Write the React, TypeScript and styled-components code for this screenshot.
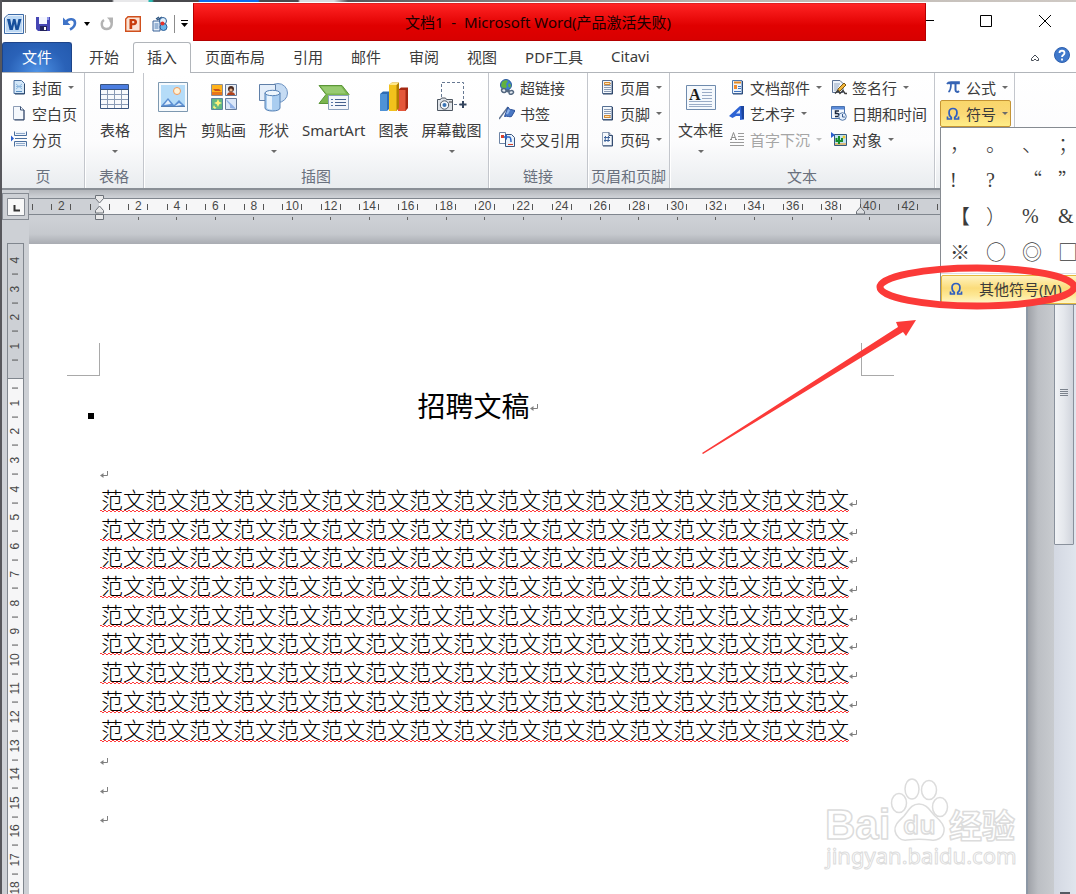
import React from "react";
import styled, { createGlobalStyle, css } from "styled-components";

const UI_FONT = '"Noto Sans", "Noto Sans CJK SC", sans-serif';
const CJK_FONT = '"Noto Sans CJK SC", sans-serif';

const GlobalStyle = createGlobalStyle`
  * { box-sizing: border-box; }
  html, body { margin: 0; padding: 0; }
  body { font-family: ${UI_FONT}; font-size: 15px; color: #3b3b3b; background: #fff; }
  button { font: inherit; color: inherit; border: 0; background: none; padding: 0; margin: 0; white-space: nowrap; }
`;

const Desktop = styled.div`
  position: relative;
  display: flex;
  flex-direction: column;
  height: 100vh;
  overflow: hidden;
  border-left: 2px solid #57575c;
  background: #fff;
`;

const Wallpaper = styled.div`
  flex: none;
  height: 2px;
  background: linear-gradient(90deg, #4a4c50 0 110px, #e8e8ea 112px 146px, #28b8b0 147px 150px, #48484c 152px 196px, #0a6cf0 198px 256px, #4a4a4e 258px 296px, #d8dce0 298px 332px, #55555a 346px, #b9b4ae 700px, #cfc9c4 100%);
`;

const TitleBar = styled.header`
  flex: none;
  display: flex;
  height: 40px;
`;

const QuickAccess = styled.div`
  flex: none;
  display: flex;
  align-items: center;
  width: 191px;
  padding-top: 4px;
`;

const QuickButton = styled.button<{ $width: number }>`
  display: flex;
  align-items: center;
  justify-content: center;
  width: ${(p) => p.$width}px;
  height: 24px;
`;

const QuickDivider = styled.span`
  width: 1px;
  height: 18px;
  background: #8c8c8c;
`;

const Banner = styled.h1`
  flex: 1;
  display: flex;
  align-items: center;
  justify-content: center;
  height: 38px;
  margin: 1px 0 0;
  padding-right: 43px;
  padding-bottom: 2px;
  border: 1px solid #b40000;
  border-top-color: #e02020;
  background: linear-gradient(#ff2424, #e00000 60%, #d80000);
  color: #1c0000;
  font-size: 15px;
  font-weight: 400;
  white-space: nowrap;
`;

const WindowControls = styled.div`
  flex: none;
  display: flex;
  width: 150px;
  overflow: hidden;
`;

const ControlButton = styled.button<{ $width: number }>`
  display: flex;
  align-items: center;
  justify-content: center;
  width: ${(p) => p.$width}px;
  height: 38px;
`;

const TabBar = styled.nav`
  flex: none;
  display: flex;
  height: 31px;
  border-bottom: 1px solid #b1b5ba;
`;

const FileTab = styled.button`
  width: 70px;
  height: 30px;
  margin-right: 3px;
  padding-bottom: 2px;
  border: 1px solid #1d4489;
  border-bottom: 0;
  border-radius: 3px 3px 0 0;
  background: radial-gradient(ellipse at 50% 100%, #4f93e6 0%, #2a62b8 60%, #2359ad 100%);
  color: #fff;
`;

const Tab = styled.button<{ $active?: boolean }>`
  height: 31px;
  padding: 0 13px 4px;
  border: 1px solid transparent;
  border-bottom: 0;
  ${(p) =>
    p.$active &&
    css`
      border-color: #b1b5ba;
      border-radius: 3px 3px 0 0;
      background: #fff;
    `}
`;

const TabTools = styled.div`
  display: flex;
  align-items: center;
  gap: 14px;
  margin-left: auto;
  padding-right: 6px;
`;

const Ribbon = styled.section`
  flex: none;
  display: flex;
  height: 117px;
  border-bottom: 2px solid #8a8f96;
  background: linear-gradient(#ffffff, #fcfcfd 60%, #e9ecef);
`;

const Group = styled.div<{ $width: number }>`
  flex: none;
  display: flex;
  flex-direction: column;
  width: ${(p) => p.$width}px;
  border-right: 1px solid #c3c6cc;
  box-shadow: 1px 0 0 #fff;
`;

const GroupBody = styled.div<{ $pad?: number }>`
  flex: 1;
  display: flex;
  padding: 1px 0 0 ${(p) => p.$pad ?? 0}px;
`;

const GroupCaption = styled.div`
  height: 23px;
  line-height: 22px;
  text-align: center;
  color: #69707d;
  white-space: nowrap;
`;

const Stack = styled.div<{ $width?: number }>`
  display: flex;
  flex-direction: column;
  align-items: flex-start;
  width: ${(p) => (p.$width ? p.$width + "px" : "auto")};
`;

const SmallButton = styled.button<{ $muted?: boolean; $open?: boolean }>`
  display: flex;
  align-items: center;
  gap: 5px;
  height: 26px;
  color: ${(p) => (p.$muted ? "#a5a5a5" : "inherit")};
  ${(p) =>
    p.$open &&
    css`
      width: 71px;
      height: 27px;
      margin-left: -5px;
      padding-left: 4px;
      border: 1px solid #c49435;
      border-radius: 2px;
      background: linear-gradient(#f9d66a, #fbd876 50%, #ffee88);
    `}
`;

const LargeButton = styled.button`
  display: flex;
  flex-direction: column;
  align-items: center;
  height: 90px;
  padding: 7px 6px 0;
`;

const LargeLabel = styled.span`
  height: 24px;
  margin-top: 5px;
  line-height: 24px;
`;

const Caret = styled.span<{ $muted?: boolean; $below?: boolean }>`
  width: 0;
  height: 0;
  margin: ${(p) => (p.$below ? "8px 0 0" : "0 0 0 1px")};
  border: 3px solid transparent;
  border-bottom-width: 0;
  border-top-color: ${(p) => (p.$muted ? "#bdbdbd" : "#6b6b6b")};
`;

const MenuAnchor = styled.div`
  position: relative;
`;

const SymbolMenu = styled.div`
  position: absolute;
  z-index: 5;
  top: 100%;
  left: -5px;
  width: 190px;
  border: 1px solid #868b91;
  background: #fff;
`;

const SymbolGrid = styled.div`
  display: grid;
  grid-template-columns: repeat(5, 36px);
  grid-auto-rows: 36px;
  padding: 0 0 1px 9px;
  border-bottom: 1px solid #dcdfe3;
`;

const SymbolCell = styled.button<{ $serif?: boolean }>`
  width: 24px;
  height: 32px;
  text-align: left;
  font-family: ${(p) => (p.$serif ? '"Liberation Serif", serif' : CJK_FONT)};
  font-size: 20px;
  font-weight: 300;
  line-height: 32px;
`;

const MoreSymbols = styled.button`
  display: flex;
  align-items: center;
  gap: 15px;
  width: 100%;
  height: 29px;
  margin-top: 1px;
  padding: 0 0 2px 6px;
  border: 1px solid #e5b93d;
  border-radius: 2px;
  background: linear-gradient(#fff3c0, #fbdc7a 45%, #fde793 70%, #fff6c8);
`;

const Workspace = styled.main`
  flex: 1;
  display: flex;
  min-height: 0;
  background: #cdd0d5;
`;

const LeftRail = styled.div`
  flex: none;
  display: flex;
  flex-direction: column;
  align-items: center;
  width: 27px;
  padding-top: 3px;
`;

const TabSelector = styled.button`
  flex: none;
  display: flex;
  align-items: center;
  justify-content: center;
  width: 27px;
  height: 27px;
  border: 1px solid #868b93;
`;

const VerticalRuler = styled.div`
  flex: 1;
  min-height: 0;
  width: 17px;
  margin-top: 23px;
  padding-top: 2px;
  overflow: hidden;
  border: 1px solid #80868e;
  border-bottom: 0;
  background: linear-gradient(#cdd0d5 0 134px, #80868e 134px 135px, #f6f6f7 135px);
`;

const VerticalScale = styled.div`
  display: grid;
  grid-template-rows: repeat(23, 1fr);
  height: 657px;
`;

const VerticalMark = styled.span`
  display: flex;
  align-items: center;
  justify-content: center;
  background: linear-gradient(#555, #555) 50% 0 / 6px 1px no-repeat;
  writing-mode: vertical-rl;
  transform: rotate(180deg);
  font: 12px/15px "Liberation Sans Narrow", "Liberation Sans", sans-serif;
  color: #484848;
`;

const Center = styled.div`
  flex: 1;
  display: flex;
  flex-direction: column;
  min-width: 0;
`;

const RulerStrip = styled.div`
  position: relative;
  flex: none;
  height: 54px;
  padding-top: 8px;
  overflow: hidden;
  background: linear-gradient(#b2b5ba, #cdd0d5 7px 30px, #c6c9ce 44px, #a9acb2);
`;

const HorizontalRuler = styled.div`
  display: flex;
  height: 17px;
  border: solid #80868e;
  border-width: 1px 0;
  background: linear-gradient(90deg, #cdd0d5 0 70px, #f6f6f7 70px 831px, #80868e 831px 832px, #cdd0d5 832px);
`;

const LeadIn = styled.span`
  flex: none;
  width: 13px;
  background: linear-gradient(#555, #555) 3px 50% / 1px 6px no-repeat;
`;

const HorizontalScale = styled.div`
  flex: none;
  display: grid;
  grid-template-columns: repeat(24, 1fr);
  width: 924px;
`;

const HorizontalMark = styled.span`
  display: flex;
  align-items: center;
  justify-content: space-evenly;
  height: 15px;
  background:
    linear-gradient(#555, #555) 25% 50% / 1px 6px no-repeat,
    linear-gradient(#555, #555) 75% 50% / 1px 6px no-repeat;
  font: 12px/15px "Liberation Sans Narrow", "Liberation Sans", sans-serif;
  color: #484848;
`;

const DefaultTabs = styled.div`
  width: 770px;
  height: 3px;
  margin: 2px 0 0 71px;
  display: grid;
  grid-template-columns: repeat(20, 1fr);
  justify-items: end;
`;

const DefaultTab = styled.span`
  width: 1px;
  height: 3px;
  background: #666;
`;

const IndentMarkers = styled.svg`
  position: absolute;
  top: 5px;
  left: 65px;
`;

const RightIndent = styled.svg`
  position: absolute;
  top: 16px;
  left: 826px;
`;

const PageRow = styled.div`
  flex: 1;
  display: flex;
  min-height: 0;
`;

const Page = styled.article`
  position: relative;
  flex: 1;
  min-width: 0;
  overflow: hidden;
  border-right: 2px solid #8c97a5;
  background: #fff;
  color: #000;
`;

const PageGutter = styled.div`
  flex: none;
  width: 26px;
  background: linear-gradient(90deg, #9fa2a8, #bcbfc4 10px, #c8cbcf);
`;

const CropRow = styled.div`
  display: flex;
  gap: 761px;
  padding: 99px 0 0 38px;
`;

const CropMark = styled.span<{ $side: "left" | "right" }>`
  flex: none;
  width: 33px;
  height: 33px;
  border-bottom: 1px solid #a9a9a9;
  ${(p) => (p.$side === "left" ? "border-right" : "border-left")}: 1px solid #a9a9a9;
`;

const TitleRow = styled.div`
  display: grid;
  grid-template-columns: 6px 760px;
  column-gap: 7px;
  align-items: center;
  padding: 8px 0 0 59px;
`;

const OutlineDot = styled.span`
  width: 6px;
  height: 6px;
  margin-top: 22px;
  background: #000;
`;

const DocTitle = styled.h2`
  display: flex;
  justify-content: center;
  align-items: center;
  margin: 0 7px 0 0;
  font: 400 28px/42px ${CJK_FONT};
`;

const Paragraphs = styled.div`
  display: grid;
  grid-template-rows: repeat(13, 1fr);
  height: 373px;
  margin-top: 32px;
  padding-left: 71px;
`;

const Paragraph = styled.p`
  display: flex;
  align-items: center;
  margin: 0;
  font: 300 22px/28px ${CJK_FONT};
  white-space: nowrap;
`;

const Misspelled = styled.span`
  height: 26px;
  line-height: 20px;
  padding-left: 1px;
  background:
    repeating-linear-gradient(90deg, #ff3b3b 0 2px, transparent 2px 4px) 0 22px / 100% 1px no-repeat,
    repeating-linear-gradient(90deg, transparent 0 2px, #ff3b3b 2px 4px) 0 23px / 100% 1px no-repeat;
`;

const MarkSvg = styled.svg`
  flex: none;
  margin: 6px 0 0 0;
`;

const Watermark = styled.svg`
  position: absolute;
  top: 532px;
  right: 0;
`;

const ScrollTrack = styled.div`
  flex: none;
  width: 22px;
  padding-top: 24px;
  display: flex;
  flex-direction: column;
  justify-content: space-between;
  background: linear-gradient(90deg, #d3d8e2, #e0e5ed);
`;

const ScrollThumb = styled.button`
  display: flex;
  align-items: center;
  justify-content: center;
  width: 20px;
  height: 331px;
  padding-top: 26px;
  border: 1px solid #89919c;
  border-radius: 1px;
  background: linear-gradient(90deg, #f1f3f6, #e4e7ec 50%, #d0d4dc);
`;

const ScrollDown = styled.span`
  width: 10px;
  height: 2px;
  margin-left: 6px;
  background: #555a62;
`;

const Annotation = styled.svg`
  position: absolute;
  z-index: 9;
  top: 260px;
  left: 698px;
  pointer-events: none;
`;

/* ---------- icons ---------- */

const sheet = "#4a6f9e";

function Svg({ s = 16, w, children }: { s?: number; w?: number; children: React.ReactNode }) {
  return (
    <svg width={w ?? s} height={s} viewBox={`0 0 ${w ?? s} ${s}`} fill="none" aria-hidden="true">
      {children}
    </svg>
  );
}

const WordIcon = () => (
  <Svg s={20}>
    <path d="M4 .5h15.500v19H.5V4z" fill="#e8f1fb" stroke="#3c6ba8" />
    <path d="M4 2h14v16H2V5z" fill="#bcd8f4" />
    <path d="M3 5h3.200l1.300 7L9 5h2.500l1.500 7 1.400-7H17.500l-3 11h-3L10.200 10 8.800 16H5.600z" fill="#17509c" />
  </Svg>
);
const SaveIcon = () => (
  <Svg>
    <path d="M1 1h14v14H3l-2-2z" fill="#4646b4" />
    <path d="M4 1h8v7H4z" fill="#f4f6ff" />
    <path d="M12 1h2v3h-2z" fill="#8f96e8" />
    <path d="M5 10h7v5H5z" fill="#22225c" />
    <path d="M9 11h2v3H9z" fill="#fff" />
  </Svg>
);
const UndoIcon = () => (
  <Svg>
    <path d="M4 6c3-4 9-3.500 9 1 0 3-2 5-5 6.500" stroke="#3f74c8" strokeWidth="2.600" />
    <path d="M1 1.500V9h7.500z" fill="#3f74c8" />
  </Svg>
);
const RedoIcon = () => (
  <Svg>
    <path d="M5 4C1.500 6 2 13 7.500 13S14 7 11 4" stroke="#b3b3b3" strokeWidth="2.400" />
    <path d="M8 1.500h6V8z" fill="#b3b3b3" />
  </Svg>
);
const PptIcon = () => (
  <Svg>
    <path d="M3 .7h12.300v14.600H.7V3z" fill="#fbe4d6" stroke="#d0501d" strokeWidth="1.400" />
    <path d="M4.500 3h4.200c4.500 0 4.500 6.200 0 6.200H7.200V13H4.500zm2.700 2v2.300h1c1.600 0 1.600-2.300 0-2.300z" fill="#c83c0c" fillRule="evenodd" />
  </Svg>
);
const CiteIcon = () => (
  <Svg>
    <path d="M1 5h7v10H1z" fill="#e7f0fa" stroke="#3a6398" />
    <path d="M2.500 8h4M2.500 10h4M2.500 12h4" stroke="#4d7ab2" />
    <path d="M4 3l3-2M7 4l3-2M5 4l5-3" stroke="#29527e" strokeWidth="1.300" />
    <circle cx="11" cy="5" r="3.500" fill="#dff0fc" stroke="#2b5d97" />
    <circle cx="11.500" cy="11" r="3.500" fill="#69b5ea" stroke="#2b5d97" />
    <circle cx="10.500" cy="7.500" r="2" fill="#e5322a" />
  </Svg>
);
const CoverIcon = () => (
  <Svg>
    <path d="M3 1.500h7.500L13.500 4.500v10H3z" fill="#d3e7f8" stroke={sheet} />
    <path d="M5 5l6 5M11 5l-6 5M5 7.500h6" stroke="#8db8df" />
    <path d="M5 12.500h6" stroke="#5a90c4" />
    <path d="M13.500 5v10H4" stroke="#2b4668" />
  </Svg>
);
const BlankIcon = () => (
  <Svg>
    <path d="M2.500 1.500h7l3.500 3.500v9.500H2.500z" fill="#f5f8fc" stroke="#8d9db5" />
    <path d="M9.500 1.500V5H13" stroke="#3c5275" />
    <path d="M13 5v10H3.500" stroke="#2b3f60" />
  </Svg>
);
const BreakIcon = () => (
  <Svg>
    <path d="M3.500.5v4h12v-4M3.500 15.500v-5h12v5" fill="#eef3fa" stroke="#4a6f9e" />
    <path d="M5 2.500h9M5 12.500h9M5 14.500h9" stroke="#8fa9cb" />
    <path d="M4 7.500h12" stroke="#4a6f9e" />
    <path d="M0 4.500v6l3-3z" fill="#2a5fd0" />
  </Svg>
);
const TableIcon = () => (
  <Svg s={32}>
    <path d="M1.500 3.500h28v24h-28z" fill="#f8fafd" stroke="#39547e" />
    <path d="M2 4h27v4H2z" fill="#4b7de0" />
    <path d="M2 13.500h27M2 18.500h27M2 23.500h27M8.500 8v19M15.500 8v19M22.500 8v19" stroke="#8a9bb6" />
    <path d="M2 8.500h27" stroke="#39547e" />
  </Svg>
);
const PictureIcon = () => (
  <Svg s={32}>
    <path d="M1.500 1.500h29v29h-29z" fill="#f6fafd" stroke="#7d98b0" />
    <path d="M4 4h24v21H4z" fill="#b5dcf8" />
    <circle cx="20" cy="10" r="3.500" fill="#fff2d6" stroke="#f29a5a" />
    <path d="M4 25l7-8 6 7 5-5 6 6z" fill="#5c8fd2" />
    <path d="M7 24l4-5 3 4M18 25l4-3 3 2" fill="#e4f0fc" />
    <path d="M4 25.500h24" stroke="#5680b4" />
  </Svg>
);
const ClipArtIcon = () => (
  <Svg s={32}>
    <path d="M3.500 3.500h11v11h-11z" fill="#ffb21a" stroke="#8a8f9a" />
    <path d="M4 11h10v3H4z" fill="#e8761a" />
    <path d="M5 8h6l2 2H7z" fill="#c8501a" />
    <path d="M17.500 3.500h11v11h-11z" fill="#e9eef5" stroke="#667a98" />
    <path d="M19 14c0-4 8-4 8 0z" fill="#b0421c" />
    <circle cx="23" cy="8" r="3" fill="#4a2a20" />
    <circle cx="23" cy="9" r="1.600" fill="#e8b48a" />
    <path d="M3.500 17.500h11v11h-11z" fill="#63b884" stroke="#5a86a0" />
    <path d="M10 18l1.200 2.800L14 22l-2.800 1.200L10 26l-1.200-2.800L6 22l2.800-1.200zM6 24l1 2 1.500.5L7 28l-2-1.500z" fill="#fff27a" />
    <path d="M17.500 17.500h11v11h-11z" fill="#dbe7f8" stroke="#667a98" />
    <path d="M18 18c1 5 5 4 4 9l6 1c-3-4-6-6-10-10z" fill="#8fb0e6" />
  </Svg>
);
const ShapesIcon = () => (
  <Svg s={32}>
    <circle cx="20" cy="12" r="9.500" fill="#c5dbf3" stroke="#6d93c2" />
    <path d="M1.500 3.500h16v16h-16z" fill="#e4eefa" stroke="#5f7fa8" />
    <path d="M7 12v15c0 4 15 4 15 0V12z" fill="#a9cdf0" stroke="#5480b4" />
    <path d="M9 13v14c1.500 1.500 3 1.600 5 1.700V13z" fill="#e8f3fd" />
    <ellipse cx="14.500" cy="12" rx="7.500" ry="2.700" fill="#eef6fd" stroke="#5480b4" />
  </Svg>
);
const SmartArtIcon = () => (
  <Svg s={32} w={34}>
    <path d="M2 4.500h23l7 9-7 9H2l7-9z" fill="#7ab54f" stroke="#5b9638" />
    <path d="M4 5.500h20l5 7H9.500z" fill="#98cb72" />
    <path d="M11.500 14.500h20v14h-20z" fill="#f4f7fb" stroke="#8ba1bd" />
    <path d="M18 18.500h11M18 21.500h11M18 24.500h11" stroke="#46628e" />
    <path d="M14 18.500h2M14 21.500h2M14 24.500h2" stroke="#5878a8" />
  </Svg>
);
const ChartIcon = () => (
  <Svg s={32}>
    <path d="M2 13l3-2.500h6V28l-2 2H2z" fill="#2f6db4" />
    <path d="M2 13h7v17H2z" fill="#4e92d6" />
    <path d="M20 9l3-2.500h7V27l-2.500 3H20z" fill="#a52812" />
    <path d="M20 9h7.500v21H20z" fill="#e4573a" />
    <path d="M11 4l3-2.500h7V27l-2.500 3H11z" fill="#b07d00" />
    <path d="M11 4h7.500v26H11z" fill="#f2c21c" />
    <path d="M11 4l3-2.500h7L18.500 4z" fill="#ffe88a" />
  </Svg>
);
const ScreenshotIcon = () => (
  <Svg s={32}>
    <path d="M5.500 16V1.500h22V20" stroke="#667892" strokeDasharray="3 2" />
    <path d="M18 23.500h6" stroke="#667892" strokeDasharray="3 2" />
    <path d="M27 20v7M23.500 23.500h7" stroke="#34455e" strokeWidth="2" />
    <path d="M1.500 18.500h3l1-1.500h4l1 1.500h6v11h-15z" fill="#dfe3e8" stroke="#4c5560" />
    <circle cx="8.500" cy="24" r="4.200" fill="#f5f8fb" stroke="#4c5560" />
    <circle cx="8.500" cy="24" r="2" fill="#3b75b5" />
    <path d="M13 21h3" stroke="#333" />
  </Svg>
);
const LinkIcon = () => (
  <Svg>
    <circle cx="7" cy="6" r="5.500" fill="#3c7fd0" stroke="#2b5c9c" />
    <path d="M3 3c2-2 5-2 6-1L7 5 8 8l-3 2-3-3zM10 4l2 2-1 3-2-2z" fill="#63b23e" />
    <path d="M3 12.500c-2-3 3-4 4-1.500l4 1c3-2 5 2 2 3s-3-1-3-2l-3-1c0 2-3 2-4 .5z" stroke="#53677f" strokeWidth="1.500" fill="#e4eaf1" />
  </Svg>
);
const BookmarkIcon = () => (
  <Svg>
    <path d="M0 14L9 2" stroke="#5f7391" strokeWidth="1.400" />
    <path d="M9 2c1 2 2 2.500 3 2.500l4 1-3.500 6c-2 1-4-1-7 0z" fill="#4a78c4" stroke="#2c519a" />
    <path d="M9 4l-2 5 2 .3 2-4z" fill="#8db2e8" />
  </Svg>
);
const CrossRefIcon = () => (
  <Svg>
    <path d="M.5 1.500h6v11h-6z" fill="#fff" stroke="#6d84a5" />
    <path d="M2 4h3v3H2z" fill="#d8402a" />
    <path d="M6.500 3.500h6l3 3v9h-9z" fill="#eaf2fb" stroke="#37547f" />
    <path d="M7 6h3c2 0 2 2 2 5" stroke="#2b66c2" strokeWidth="1.500" />
    <path d="M8 3v6L4.500 6z" fill="#2b66c2" />
    <path d="M9 13.500h5" stroke="#d8402a" />
  </Svg>
);
const HeaderIcon = ({ footer = false }: { footer?: boolean }) => (
  <Svg>
    <path d="M3.500 1.500h9.500v13H3.500z" fill="#f4f8fc" stroke="#566f92" />
    <path d="M5 4.500h7M5 6.500h7M5 8.500h7M5 10.500h7M5 12.500h7" stroke="#8b9cb5" />
    <path d={footer ? "M5.500 10.500h5.500v2H5.500z" : "M5.500 3.500h5.500v2H5.500z"} fill="#ffe2b0" stroke="#d58a32" />
    <path d="M13.500 2v13H4" stroke="#2f4669" />
  </Svg>
);
const PageNumberIcon = () => (
  <Svg>
    <path d="M3.500 1.500H10l3 3v10H3.500z" fill="#f6f9fd" stroke="#8d9db5" />
    <path d="M6.500 5L6 11M9.500 5L9 11M5 6.500h6M5 9.500h6" stroke="#41659c" />
    <path d="M10 1.500v3h3.500V15H4" stroke="#334b70" />
  </Svg>
);
const TextBoxIcon = () => (
  <Svg s={32}>
    <path d="M1.500 4.500h29v24h-29z" fill="#f5f9fd" stroke="#6f8bad" />
    <path d="M17 8.500h10M17 11.500h10M17 14.500h10M17 17.500h10M4 20.500h23M4 23.500h23M4 25.500h23" stroke="#9aacc6" />
    <text x="4" y="19" fontFamily="Liberation Serif" fontSize="16" fontWeight="700" fill="#1c1c1c">A</text>
  </Svg>
);
const PartsIcon = () => (
  <Svg>
    <path d="M3.500 1.500H13v13H3.500z" fill="#eef4fb" stroke="#4f77ad" />
    <path d="M5 3.500h7" stroke="#e28a24" strokeWidth="2" />
    <path d="M5 6h3v4H5z" fill="#f08b2c" />
    <path d="M9 7.500h3M9 9.500h3M5 12.500h7" stroke="#3f74c0" />
    <path d="M13.500 2v13H4" stroke="#2c4a78" />
  </Svg>
);
const WordArtIcon = () => (
  <Svg>
    <path d="M0 11l11-10h4v13.500l-4 .5v-4H7L3.500 13z" fill="#2d63d4" />
    <path d="M7 8.500l4-4v4z" fill="#dfe9fb" />
    <path d="M12 1h3v13h-2z" fill="#1c459e" />
  </Svg>
);
const DropCapIcon = () => (
  <Svg>
    <path d="M9 2.500h6M9 5.500h6M9 8.500h6M1 11.500h14M1 14.500h14" stroke="#9a9a9a" />
    <path d="M1 8.500h2M6 8.500h2M2 8.500L4.500 1.500 7 8.500M3 6.500h3" stroke="#8d8d8d" />
  </Svg>
);
const SignatureIcon = () => (
  <Svg>
    <path d="M1.500 1.500H9l3 3v9H1.500z" fill="#edf3fa" stroke="#5c7294" />
    <path d="M3 5h6M3 7h5M3 9h4M3 11h3" stroke="#93a6c1" />
    <path d="M13 4l2 2-6 6-3 1 1-3z" fill="#f3b63b" stroke="#7b5a14" />
    <path d="M4 14.500l3-3 2 3 3-3 2 3h2" stroke="#3d3d3d" strokeWidth="1.400" />
  </Svg>
);
const DateIcon = () => (
  <Svg>
    <path d="M.5 1.500h13v12H.5z" fill="#f4f8fd" stroke="#4a73b0" />
    <path d="M1 2h12v2.500H1z" fill="#5a8ad8" />
    <path d="M8 6H4.500v2.500h1.700c2.200 0 2.200 3 0 3H4" stroke="#1d2a40" strokeWidth="1.500" />
    <circle cx="11.500" cy="11.500" r="3.800" fill="#e3eefb" stroke="#5578a8" />
    <path d="M11.500 9v3h2.300" stroke="#3d5f92" />
  </Svg>
);
const ObjectIcon = () => (
  <Svg>
    <path d="M3.500 3.500h12v11h-12z" fill="#bde2f0" stroke="#35587c" />
    <path d="M4 12h11v2H4z" fill="#d9b77a" />
    <circle cx="13" cy="6" r="1.500" fill="#f4c52e" />
    <path d="M8 13V5M5.500 7v3H8M11 7v3H8" stroke="#168a2c" strokeWidth="2" />
    <path d="M0 1v6l4-3z" fill="#2a5fd0" />
  </Svg>
);
const PiIcon = () => (
  <Svg>
    <path d="M2 5c1-2 2-2 4-2h8v1.500H3.500M6 4.500C6 9 5 12 3.500 13" stroke="#3563b4" strokeWidth="1.700" />
    <path d="M10.500 4.500V11c0 2 2 2.500 3.500 1" stroke="#3563b4" strokeWidth="2" />
  </Svg>
);
const OmegaIcon = () => (
  <Svg>
    <path d="M2.500 10.500V13h3.800v-1.500C3.500 9.500 2.500 2.500 8 2.500s4.500 7 1.700 9V13h3.800v-2.500" stroke="#2f5ec0" strokeWidth="1.700" />
  </Svg>
);
const HelpIcon = () => (
  <Svg s={16}>
    <circle cx="8" cy="8" r="7.500" fill="#3f78cb" stroke="#2d5fae" />
    <path d="M5.500 6C5.500 3 10.500 3 10.500 6c0 2-2.500 2-2.500 4M8 11.500v2" stroke="#fff" strokeWidth="1.800" />
  </Svg>
);

const ParagraphMark = () => (
  <MarkSvg width="8" height="8" viewBox="0 0 8 8" fill="none" aria-hidden="true">
    <path d="M7.500 0v4.500H2" stroke="#808080" />
    <path d="M0 4.500L3.500 2v5z" fill="#808080" />
  </MarkSvg>
);

/* ---------- controls ---------- */

type Item = { icon: React.ReactNode; label: string; caret?: boolean; muted?: boolean };

const Small = ({ icon, label, caret, muted }: Item) => (
  <SmallButton $muted={muted}>
    {icon}
    {label}
    {caret && <Caret $muted={muted} />}
  </SmallButton>
);

const Large = ({ icon, label, caret }: Item) => (
  <LargeButton>
    {icon}
    <LargeLabel>{label}</LargeLabel>
    {caret && <Caret $below />}
  </LargeButton>
);

const tabs = ["开始", "插入", "页面布局", "引用", "邮件", "审阅", "视图", "PDF工具", "Citavi"];

const symbols = [
  "，", "。", "、", "；",
  "!", "?", "“", "”",
  "【", "）", "%", "&",
  "※", "○", "◎", "□",
];
const serifSymbols = new Set(["!", "?", "%", "&"]);

const horizontalLabels = Array.from({ length: 24 }, (_, i) => {
  const n = Math.abs(i * 2 - 2);
  return n === 0 || n === 44 ? "" : String(n);
});
const verticalLabels = Array.from({ length: 23 }, (_, i) => (i === 4 ? "" : String(Math.abs(i - 4))));

const sampleLine = "范文".repeat(17);
const paragraphs = ["", ...Array(9).fill(sampleLine), "", "", ""];

export default function App() {
  return (
    <Desktop>
      <GlobalStyle />
      <Wallpaper />
      <TitleBar>
        <QuickAccess>
          <QuickButton $width={23} aria-label="Word"><WordIcon /></QuickButton>
          <QuickDivider />
          <QuickButton $width={34} aria-label="保存"><SaveIcon /></QuickButton>
          <QuickButton $width={20} aria-label="撤消"><UndoIcon /></QuickButton>
          <QuickButton $width={14} aria-label="撤消选项">
            <Svg s={4} w={6}><path d="M0 0h6L3 4z" fill="#000" /></Svg>
          </QuickButton>
          <QuickButton $width={26} aria-label="重复"><RedoIcon /></QuickButton>
          <QuickButton $width={26} aria-label="PowerPoint"><PptIcon /></QuickButton>
          <QuickButton $width={28} aria-label="引文"><CiteIcon /></QuickButton>
          <QuickDivider />
          <QuickButton $width={18} aria-label="自定义快速访问工具栏">
            <Svg s={8}><path d="M1 .5h7" stroke="#000" /><path d="M1 3h7L4.500 7z" fill="#000" /></Svg>
          </QuickButton>
        </QuickAccess>
        <Banner>文档1&nbsp; - &nbsp;Microsoft Word(产品激活失败)</Banner>
        <WindowControls>
          <ControlButton $width={30} aria-label="最小化">
            <Svg s={12} w={30}><path d="M0 5.500h8" stroke="#000" /></Svg>
          </ControlButton>
          <ControlButton $width={60} aria-label="最大化">
            <Svg s={12}><path d="M.5.5h11v11H.5z" stroke="#000" /></Svg>
          </ControlButton>
          <ControlButton $width={58} aria-label="关闭">
            <Svg s={12}><path d="M0 0l12 12M12 0L0 12" stroke="#000" /></Svg>
          </ControlButton>
        </WindowControls>
      </TitleBar>

      <TabBar>
        <FileTab>文件</FileTab>
        {tabs.map((t) => (
          <Tab key={t} $active={t === "插入"}>{t}</Tab>
        ))}
        <TabTools>
          <button aria-label="折叠功能区">
            <Svg s={10}><path d="M1.500 5.500L5 2l3.500 3.500v2H6.500L5 6 3.500 7.500h-2z" stroke="#454b55" /></Svg>
          </button>
          <button aria-label="帮助"><HelpIcon /></button>
        </TabTools>
      </TabBar>

      <Ribbon>
        <Group $width={83}>
          <GroupBody $pad={9}>
            <Stack>
              <Small icon={<CoverIcon />} label="封面" caret />
              <Small icon={<BlankIcon />} label="空白页" />
              <Small icon={<BreakIcon />} label="分页" />
            </Stack>
          </GroupBody>
          <GroupCaption>页</GroupCaption>
        </Group>
        <Group $width={59}>
          <GroupBody $pad={8}>
            <Large icon={<TableIcon />} label="表格" caret />
          </GroupBody>
          <GroupCaption>表格</GroupCaption>
        </Group>
        <Group $width={345}>
          <GroupBody $pad={7}>
            <Large icon={<PictureIcon />} label="图片" />
            <Large icon={<ClipArtIcon />} label="剪贴画" />
            <Large icon={<ShapesIcon />} label="形状" caret />
            <Large icon={<SmartArtIcon />} label="SmartArt" />
            <Large icon={<ChartIcon />} label="图表" />
            <Large icon={<ScreenshotIcon />} label="屏幕截图" caret />
          </GroupBody>
          <GroupCaption>插图</GroupCaption>
        </Group>
        <Group $width={99}>
          <GroupBody $pad={10}>
            <Stack>
              <Small icon={<LinkIcon />} label="超链接" />
              <Small icon={<BookmarkIcon />} label="书签" />
              <Small icon={<CrossRefIcon />} label="交叉引用" />
            </Stack>
          </GroupBody>
          <GroupCaption>链接</GroupCaption>
        </Group>
        <Group $width={82}>
          <GroupBody $pad={11}>
            <Stack>
              <Small icon={<HeaderIcon />} label="页眉" caret />
              <Small icon={<HeaderIcon footer />} label="页脚" caret />
              <Small icon={<PageNumberIcon />} label="页码" caret />
            </Stack>
          </GroupBody>
          <GroupCaption>页眉和页脚</GroupCaption>
        </Group>
        <Group $width={265}>
          <GroupBody $pad={2}>
            <Large icon={<TextBoxIcon />} label="文本框" caret />
            <Stack $width={102}>
              <Small icon={<PartsIcon />} label="文档部件" caret />
              <Small icon={<WordArtIcon />} label="艺术字" caret />
              <Small icon={<DropCapIcon />} label="首字下沉" caret muted />
            </Stack>
            <Stack>
              <Small icon={<SignatureIcon />} label="签名行" caret />
              <Small icon={<DateIcon />} label="日期和时间" />
              <Small icon={<ObjectIcon />} label="对象" caret />
            </Stack>
          </GroupBody>
          <GroupCaption>文本</GroupCaption>
        </Group>
        <Group $width={80}>
          <GroupBody $pad={10}>
            <Stack>
              <Small icon={<PiIcon />} label="公式" caret />
              <MenuAnchor>
                <SmallButton $open aria-expanded="true">
                  <OmegaIcon />
                  符号
                  <Caret />
                </SmallButton>
                <SymbolMenu>
                  <SymbolGrid>
                    {symbols.map((s, i) => (
                      <React.Fragment key={s}>
                        <SymbolCell $serif={serifSymbols.has(s)}>{s}</SymbolCell>
                        {i % 4 === 3 && <span />}
                      </React.Fragment>
                    ))}
                  </SymbolGrid>
                  <MoreSymbols>
                    <OmegaIcon />
                    <span>其他符号(<u>M</u>)</span>
                  </MoreSymbols>
                </SymbolMenu>
              </MenuAnchor>
            </Stack>
          </GroupBody>
        </Group>
      </Ribbon>

      <Workspace>
        <LeftRail>
          <TabSelector aria-label="制表符">
            <Svg s={18}>
              <path d="M.5.5h17v17H.5z" fill="#f8f8f8" stroke="#868b93" />
              <path d="M7.500 7v5.500H13" stroke="#333" strokeWidth="2" />
            </Svg>
          </TabSelector>
          <VerticalRuler>
            <VerticalScale>
              {verticalLabels.map((n, i) => (
                <VerticalMark key={i}>{n}</VerticalMark>
              ))}
            </VerticalScale>
          </VerticalRuler>
        </LeftRail>

        <Center>
          <RulerStrip>
            <HorizontalRuler>
              <LeadIn />
              <HorizontalScale>
                {horizontalLabels.map((n, i) => (
                  <HorizontalMark key={i}>{n}</HorizontalMark>
                ))}
              </HorizontalScale>
            </HorizontalRuler>
            <DefaultTabs>
              {Array.from({ length: 20 }, (_, i) => (
                <DefaultTab key={i} />
              ))}
            </DefaultTabs>
            <IndentMarkers width="11" height="26" viewBox="0 0 11 26" fill="#e9e9ea" stroke="#6d7279" aria-hidden="true">
              <path d="M1.500.5h8v3l-4 4.500-4-4.500zM5.500 11l4 4.500V18h-8v-2.500zM1.500 19.500h8v5h-8z" />
            </IndentMarkers>
            <RightIndent width="11" height="9" viewBox="0 0 11 9" fill="#dcdee1" stroke="#6d7279" aria-hidden="true">
              <path d="M5.500 1l4 4.500V8h-8V5.500z" />
            </RightIndent>
          </RulerStrip>
          <PageRow>
            <Page>
              <CropRow>
                <CropMark $side="left" />
                <CropMark $side="right" />
              </CropRow>
              <TitleRow>
                <OutlineDot />
                <DocTitle>招聘文稿<ParagraphMark /></DocTitle>
              </TitleRow>
              <Paragraphs>
                {paragraphs.map((text, i) => (
                  <Paragraph key={i}>
                    {text && <Misspelled>{text}</Misspelled>}
                    <ParagraphMark />
                  </Paragraph>
                ))}
              </Paragraphs>
              <Watermark width="204" height="100" viewBox="0 0 204 100" fill="#fff" stroke="#dcdcdc" strokeWidth="1.500" strokeLinejoin="round" aria-hidden="true">
                <text x="3" y="63" fontFamily="Liberation Sans" fontWeight="700" fontSize="42">Bai</text>
                <ellipse cx="77" cy="27" rx="7.500" ry="9.500" />
                <ellipse cx="90" cy="13" rx="7" ry="10" />
                <ellipse cx="107" cy="14" rx="7.500" ry="9.500" />
                <ellipse cx="118" cy="31" rx="7.500" ry="9.500" />
                <path d="M97 28c8 0 11 7 16 12 6 5 10 10 9 15-1 7-7 10-13 9-8-1-16-1-24 0-7 1-11-4-12-9-1-6 4-10 9-15 5-6 7-12 15-12z" />
                <text x="81" y="58" fontFamily="Open Sans" fontSize="26" fontWeight="600">du</text>
                <text x="127" y="62" fontFamily="Noto Sans CJK SC" fontSize="33" fontWeight="700">经验</text>
                <text x="4" y="88" fontFamily="Noto Sans" fontSize="22" strokeWidth="1">jingyan.baidu.com</text>
              </Watermark>
            </Page>
            <PageGutter />
          </PageRow>
        </Center>

        <ScrollTrack>
          <ScrollThumb aria-label="滚动">
            <Svg s={9} w={8}><path d="M0 1.500h8M0 3.500h8M0 5.500h8M0 7.500h8" stroke="#7b828c" /></Svg>
          </ScrollThumb>
          <ScrollDown />
        </ScrollTrack>
      </Workspace>

      <Annotation width="380" height="200" viewBox="0 0 380 200" aria-hidden="true">
        <ellipse cx="277" cy="27" rx="97" ry="19" fill="none" stroke="#fb3a38" strokeWidth="7" />
        <path d="M2 193L198 67l-2-5 20-2-10 16-3-4L3 194z" fill="#fb3a38" />
      </Annotation>
    </Desktop>
  );
}
